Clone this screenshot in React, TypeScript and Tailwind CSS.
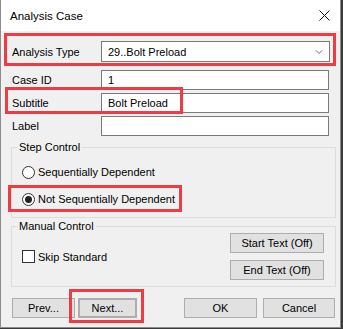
import { ChevronDown } from "lucide-react";

const font = { fontFamily: '"Liberation Sans", Arial, sans-serif' };

function Field({ label, value }: { label: string; value?: string }) {
  return (
    <div className="flex items-center h-[20px]">
      <span className="w-[100px] pl-[11px]">{label}</span>
      <div className="w-[228px] h-[20px] bg-white border border-[#7a7a7a] flex items-center pl-[6px]">
        {value}
      </div>
    </div>
  );
}

function Btn({ label, className = "" }: { label: string; className?: string }) {
  return (
    <button
      className={
        "h-[20px] bg-[#e1e1e1] border border-[#adadad] flex items-center justify-center text-black " +
        className
      }
    >
      {label}
    </button>
  );
}

function Radio({ label, checked }: { label: string; checked?: boolean }) {
  return (
    <div className="flex items-center h-[16px] pl-[10px] gap-[3px]">
      <span className="w-[13px] h-[13px] rounded-full border border-[#333] bg-white flex items-center justify-center">
        {checked && <span className="w-[7px] h-[7px] rounded-full bg-[#222]" />}
      </span>
      <span>{label}</span>
    </div>
  );
}

export default function App() {
  return (
    <div className="w-[343px] h-[329px] bg-[#3a3a3a] text-[11px] text-black leading-[16px]" style={font}>
      <div className="relative w-[341px] h-[328px] bg-[#f0f0f0] border-l border-r border-b border-[#8c8c8c]">
        {/* Title bar */}
        <div className="h-[31px] bg-white flex items-center justify-between pl-[9px] pr-[10px]">
          <span className="text-[11.5px]">Analysis Case</span>
          <svg width="11" height="11" viewBox="0 0 11 11" className="mb-[1px]">
            <path d="M0.5 0.5 L10.5 10.5 M10.5 0.5 L0.5 10.5" stroke="#111" strokeWidth="1" />
          </svg>
        </div>

        {/* Analysis Type */}
        <div className="mt-[10px] flex items-center h-[21px]">
          <span className="w-[100px] pl-[11px]">Analysis Type</span>
          <div className="w-[229px] h-[21px] bg-white border border-[#7a7a7a] flex items-center justify-between pl-[6px] pr-[4px]">
            <span>29..Bolt Preload</span>
            <ChevronDown className="w-[12px] h-[12px] text-[#444]" strokeWidth={1.5} />
          </div>
        </div>

        <div className="mt-[8px] flex flex-col gap-[3px]">
          <Field label="Case ID" value="1" />
          <Field label="Subtitle" value="Bolt Preload" />
          <Field label="Label" />
        </div>

        {/* Step Control */}
        <div className="relative mt-[11px] ml-[10px] w-[325px] h-[71px] border border-[#dcdcdc] pt-[16px]">
          <span className="absolute -top-[9px] left-[5px] px-[2px] bg-[#f0f0f0]">Step Control</span>
          <Radio label="Sequentially Dependent" />
          <div className="mt-[11px]">
            <Radio label="Not Sequentially Dependent" checked />
          </div>
        </div>

        {/* Manual Control */}
        <div className="relative mt-[8px] ml-[10px] w-[325px] h-[61px] border border-[#dcdcdc] flex items-center justify-between pr-[11px]">
          <span className="absolute -top-[9px] left-[5px] px-[2px] bg-[#f0f0f0]">Manual Control</span>
          <div className="flex items-center pl-[10px] gap-[3px]">
            <span className="w-[13px] h-[13px] border border-[#333] bg-white" />
            <span>Skip Standard</span>
          </div>
          <div className="flex flex-col gap-[7px]">
            <Btn label="Start Text (Off)" className="w-[94px]" />
            <Btn label="End Text (Off)" className="w-[94px]" />
          </div>
        </div>

        {/* Footer buttons */}
        <div className="mt-[11px] flex items-center pl-[11px]">
          <Btn label="Prev..." className="w-[63px]" />
          <Btn label="Next..." className="w-[59px] ml-[3px] border-2 border-[#0078d7]" />
          <Btn label="OK" className="w-[73px] ml-[47px]" />
          <Btn label="Cancel" className="w-[72px] ml-[6px]" />
        </div>

        {/* Red annotation boxes */}
        <div className="absolute left-[3px] top-[33px] w-[332px] h-[33px] border-[3px] border-[#ef3b43]" />
        <div className="absolute left-[4px] top-[87px] w-[178px] h-[27px] border-[3px] border-[#ef3b43]" />
        <div className="absolute left-[7px] top-[185px] w-[174px] h-[27px] border-[3px] border-[#ef3b43]" />
        <div className="absolute left-[68px] top-[289px] w-[75px] h-[34px] border-[3px] border-[#ef3b43]" />
      </div>
    </div>
  );
}
